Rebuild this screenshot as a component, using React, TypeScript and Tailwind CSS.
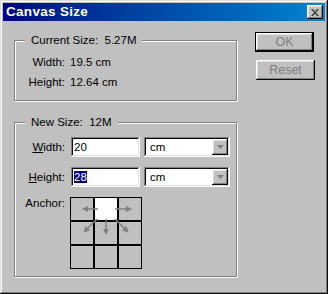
import React from 'react';

const raised =
  'shadow-[inset_-1px_-1px_#0a0a0a,inset_1px_1px_#ffffff,inset_-2px_-2px_#808080,inset_2px_2px_#dfdfdf]';
const sunken =
  'shadow-[inset_-1px_-1px_#ffffff,inset_1px_1px_#808080,inset_-2px_-2px_#dfdfdf,inset_2px_2px_#0a0a0a]';

const GroupBox = ({ title, className, children }: { title: string; className?: string; children: React.ReactNode }) => (
  <div className={`relative border border-[#808080] shadow-[1px_1px_0_#ffffff,inset_1px_1px_0_#ffffff] ${className ?? ''}`}>
    <span className="absolute left-[10px] -top-[7px] bg-[#c0c0c0] px-[6px] leading-[13px] whitespace-pre">{title}</span>
    {children}
  </div>
);

const Label = ({ children }: { children: React.ReactNode }) => (
  <div className="w-[50px] text-right leading-[13px] whitespace-pre">{children}</div>
);

const DropArrow = () => (
  <div className={`ml-auto w-[16px] h-[16px] bg-[#c0c0c0] flex items-center justify-center ${raised}`}>
    <svg width="7" height="4" viewBox="0 0 7 4">
      <polygon points="0,0 7,0 3.5,4" fill="#808080" />
    </svg>
  </div>
);

const Select = ({ value }: { value: string }) => (
  <div className={`ml-[4px] w-[86px] h-[20px] bg-white flex items-center p-[2px] ${sunken}`}>
    <span className="pl-[4px] leading-[13px]">{value}</span>
    <DropArrow />
  </div>
);

const AnchorGrid = () => {
  const cells = Array.from({ length: 9 }, (_, i) => i);
  return (
    <div className="relative ml-[5px] w-[72px] grid grid-cols-3">
      {cells.map((i) => (
        <div
          key={i}
          className={`h-[24px] border border-black ${i === 1 ? 'bg-white' : 'bg-[#c0c0c0]'}`}
        />
      ))}
      <svg className="absolute inset-0 pointer-events-none" width="72" height="72" viewBox="0 0 72 72">
        <g stroke="#808080" strokeWidth="1.5" fill="none">
          <line x1="28" y1="12" x2="16" y2="12" />
          <line x1="45" y1="12" x2="58" y2="12" />
          <line x1="27" y1="22" x2="16.5" y2="32.5" />
          <line x1="36" y1="22" x2="36" y2="33" />
          <line x1="45" y1="22" x2="55.5" y2="32.5" />
        </g>
        <g fill="#808080">
          <polygon points="12,12 18,9 18,15" />
          <polygon points="62,12 56,9 56,15" />
          <polygon points="36,38 33,32 39,32" />
          <polygon points="13.5,35.5 15.5,29 20,33.5" />
          <polygon points="58.5,35.5 56.5,29 52,33.5" />
        </g>
      </svg>
    </div>
  );
};

const Button = ({ label, isDefault }: { label: string; isDefault?: boolean }) => (
  <div className={`w-[59px] h-[20px] ${isDefault ? 'border border-black' : ''}`}>
    <div className={`w-full h-full flex items-center justify-center text-[#808080] ${raised}`}>
      <span className="leading-[13px] text-[12.5px]">{label}</span>
    </div>
  </div>
);

export default function App() {
  return (
    <div
      className={`w-[328px] h-[294px] bg-[#c0c0c0] p-[3px] font-['Liberation_Sans',Arial,sans-serif] text-[11.5px] text-black shadow-[inset_-1px_-1px_#0a0a0a,inset_1px_1px_#dfdfdf,inset_-2px_-2px_#808080,inset_2px_2px_#ffffff]`}
    >
      <div className="h-[18px] bg-gradient-to-r from-[#000080] to-[#1084d0] flex items-center justify-between pl-[3px] pr-[2px]">
        <span className="text-white font-bold text-[13.5px] tracking-[0.3px] leading-[16px]">Canvas Size</span>
        <div className={`w-[16px] h-[14px] bg-[#c0c0c0] flex items-center justify-center ${raised}`}>
          <svg width="8" height="7" viewBox="0 0 8 7">
            <path d="M0 0h2l2 2.5L6 0h2L5 3.5 8 7H6L4 4.5 2 7H0l3-3.5z" fill="#404040" />
          </svg>
        </div>
      </div>

      <div className="flex">
        <div className="ml-[11px] mt-[19px] w-[223px]">
          <GroupBox title="Current Size:  5.27M" className="h-[61px] pt-[11px]">
            <div className="flex items-center h-[20px]">
              <Label>Width:</Label>
              <span className="ml-[5px] leading-[13px]">19.5 cm</span>
            </div>
            <div className="flex items-center h-[20px]">
              <Label>Height:</Label>
              <span className="ml-[5px] leading-[13px]">12.64 cm</span>
            </div>
          </GroupBox>

          <GroupBox title="New Size:  12M" className="mt-[21px] h-[155px] pt-[14px]">
            <div className="flex items-center h-[20px]">
              <Label>
                <span className="underline">W</span>idth:
              </Label>
              <div className={`ml-[6px] w-[69px] h-[20px] bg-white flex items-center px-[2px] ${sunken}`}>
                <span className="pl-[1px] leading-[13px]">20</span>
              </div>
              <Select value="cm" />
            </div>
            <div className="flex items-center h-[20px] mt-[10px]">
              <Label>
                <span className="underline">H</span>eight:
              </Label>
              <div className={`ml-[6px] w-[69px] h-[20px] bg-white flex items-center px-[2px] ${sunken}`}>
                <span className="ml-[1px] bg-[#000080] text-white leading-[12px]">28</span>
              </div>
              <Select value="cm" />
            </div>
            <div className="flex items-start mt-[10px]">
              <Label>Anchor:</Label>
              <AnchorGrid />
            </div>
          </GroupBox>
        </div>

        <div className="ml-[18px] mt-[11px] flex flex-col">
          <Button label="OK" isDefault />
          <div className="mt-[8px] ml-px">
            <Button label="Reset" />
          </div>
        </div>
      </div>
    </div>
  );
}
